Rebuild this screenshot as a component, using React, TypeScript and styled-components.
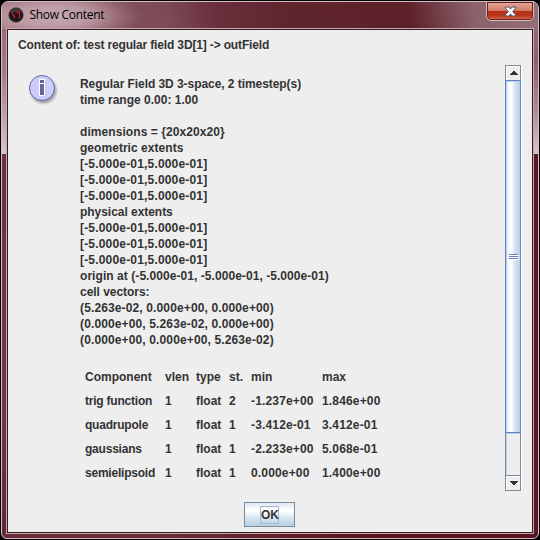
import React from 'react';
import styled, { createGlobalStyle } from 'styled-components';

const GlobalStyle = createGlobalStyle`
  * { box-sizing: border-box; }
  html, body { margin: 0; padding: 0; background: #000; overflow: hidden; }
`;

const Screen = styled.div`
  width: 540px;
  height: 540px;
  padding: 1px;
  background: #000;
  font: bold 12px/16px 'Liberation Sans', Arial, sans-serif;
  color: #333;
`;

const Frame = styled.div`
  width: 538px;
  height: 538px;
  display: flex;
  flex-direction: column;
  padding: 0 5px 5px;
  border: 1px solid #d5bfc5;
  border-radius: 7px 7px 6px 6px;
  background:
    linear-gradient(180deg, #9c6d77 0, #9c6d77 28px, #a67b86 70px, #d8c4c9 151px, #d8c4c9 152px) left top / 5px 152px no-repeat,
    linear-gradient(180deg, #9a717a 0, #8f606b 60px, #b08c95 110px, #d8c3c8 151px, #d8c3c8 152px) right top / 5px 152px no-repeat,
    linear-gradient(90deg, #6b2c3a, #6b2c3a 30%, #591320 70%, #591320) left bottom / 100% 5px no-repeat,
    linear-gradient(180deg, #6b2c3a, #743747 75%, #642533) left top / 5px 100% no-repeat,
    #5c1825;
`;

const TitleBar = styled.header`
  height: 27px;
  flex: none;
  margin: 0 -5px;
  padding-left: 6px;
  display: flex;
  align-items: flex-start;
  border-radius: 6px 6px 0 0;
  background:
    radial-gradient(ellipse 88px 26px at 54px 14px, rgba(214, 190, 197, 0.75) 0, rgba(214, 190, 197, 0.6) 40%, rgba(214, 190, 197, 0.2) 75%, transparent 100%),
    linear-gradient(78deg, #a37581 0, #8f5d69 90px, #7f4c59 130px, #7e4a58 165px, #69303d 210px, #602630 275px, #5c2029 400px, #8b626b 465px, #97727a 540px);
`;

const AppIcon = styled.svg`
  margin-top: 5px;
  flex: none;
`;

const Title = styled.h1`
  margin: 5px 0 0 5.5px;
  flex: 1;
  font: 12px/16px 'Open Sans', 'Noto Sans', sans-serif;
  letter-spacing: -0.3px;
  color: #000;
`;

const CloseButton = styled.button`
  width: 48px;
  height: 20px;
  margin: -1px 4px 0 0;
  padding: 0;
  display: grid;
  place-items: center;
  border: 1px solid #dcb9b8;
  border-radius: 0 0 5px 5px;
  box-shadow: inset 0 0 0 1px #64231f;
  background: linear-gradient(180deg, #e3aa9d 0, #d27a68 48%, #b92f17 50%, #b7341c 75%, #dc7451 100%);
`;

const Client = styled.main`
  flex: 1;
  padding: 7px 10px 5px 9px;
  display: flex;
  flex-direction: column;
  border: 1px solid #351d21;
  outline: 1px solid #c4a7ae;
  background: #eee;
`;

const Caption = styled.div`
  height: 28px;
  padding-left: 1px;
  letter-spacing: -0.15px;
`;

const Body = styled.section`
  height: 426px;
  display: flex;
`;

const IconColumn = styled.div`
  width: 63px;
  flex: none;
  padding: 9px 0 0 11px;
`;

const Report = styled.div`
  flex: 1;
  padding-top: 11px;
`;

const Line = styled.div<{ $spacing: number }>`
  height: 16px;
  white-space: nowrap;
  letter-spacing: ${p => p.$spacing}px;
`;

const Table = styled.div`
  margin: 17px 0 0 5px;
  display: grid;
  grid-template-columns: 80px 31px 33px 22px 71px 80px;
  grid-auto-rows: 24px;
  line-height: 24px;
  white-space: nowrap;
`;

const Cell = styled.span<{ $spacing: number }>`
  letter-spacing: ${p => p.$spacing}px;
`;

const ScrollBar = styled.div`
  width: 17px;
  flex: none;
  display: flex;
  flex-direction: column;
  border-right: 1px solid #fff;
`;

const ArrowButton = styled.div<{ $down?: boolean }>`
  height: ${p => (p.$down ? 16 : 15)}px;
  flex: none;
  padding-left: 2px;
  display: grid;
  place-items: center;
  border: 1px solid #7a8a99;
  border-bottom-width: ${p => (p.$down ? 1 : 0)}px;
  box-shadow: inset 1px 1px #fff;
`;

const Thumb = styled.div`
  height: 353px;
  flex: none;
  padding-left: 2px;
  display: grid;
  place-items: center;
  border: 1px solid #6382bf;
  box-shadow: inset 1px 1px #b8cfe5;
  background: linear-gradient(90deg, #ddeaf5 0, #fff 32%, #fff 40%, #dce8f3 58%, #b8cfe5 100%);
`;

const Track = styled.div`
  flex: 1;
  border: solid #7a8a99;
  border-width: 0 1px;
  box-shadow: inset 1px 1px #b8cfe5;
`;

const Footer = styled.footer`
  margin-top: 11px;
  display: flex;
  justify-content: center;
`;

const OkButton = styled.button`
  width: 51px;
  height: 25px;
  padding: 0;
  display: grid;
  place-items: center;
  border: 1px solid #7a8a99;
  background: linear-gradient(180deg, #dde8f3 0, #fff 30%, #fff 36%, #dde8f3 60%, #b8cfe5 100%);
  font: bold 12px/16px 'Liberation Sans', Arial, sans-serif;
  color: #333;
`;

const FocusRing = styled.span`
  width: 19px;
  height: 18px;
  border: 1px solid #a3b8cc;
  display: grid;
  place-items: center;
  line-height: 16px;
  letter-spacing: -0.2px;
`;

const lines: [string, number][] = [
  ['Regular Field 3D 3-space, 2 timestep(s)', -0.06],
  ['time range 0.00: 1.00', 0],
  ['', 0],
  ['dimensions = {20x20x20}', 0.07],
  ['geometric extents', 0.04],
  ['[-5.000e-01,5.000e-01]', 0.18],
  ['[-5.000e-01,5.000e-01]', 0.18],
  ['[-5.000e-01,5.000e-01]', 0.18],
  ['physical extents', -0.04],
  ['[-5.000e-01,5.000e-01]', 0.18],
  ['[-5.000e-01,5.000e-01]', 0.18],
  ['[-5.000e-01,5.000e-01]', 0.18],
  ['origin at (-5.000e-01, -5.000e-01, -5.000e-01)', 0.06],
  ['cell vectors:', -0.04],
  ['(5.263e-02, 0.000e+00, 0.000e+00)', 0.13],
  ['(0.000e+00, 5.263e-02, 0.000e+00)', 0.13],
  ['(0.000e+00, 0.000e+00, 5.263e-02)', 0.13],
];

const rows = [
  ['Component', 'vlen', 'type', 'st.', 'min', 'max'],
  ['trig function', '1', 'float', '2', '-1.237e+00', '1.846e+00'],
  ['quadrupole', '1', 'float', '1', '-3.412e-01', '3.412e-01'],
  ['gaussians', '1', 'float', '1', '-2.233e+00', '5.068e-01'],
  ['semielipsoid', '1', 'float', '1', '0.000e+00', '1.400e+00'],
];

const columnSpacing = [-0.22, 0, 0, 0, 0.16, 0.16];

const InfoIcon = () => (
  <svg width="32" height="32" viewBox="0 0 32 32">
    <defs>
      <filter id="soft" x="-20%" y="-20%" width="150%" height="150%">
        <feGaussianBlur stdDeviation="1.1" />
      </filter>
    </defs>
    <circle cx="15.5" cy="16.5" r="13" fill="#888" opacity=".75" filter="url(#soft)" />
    <circle cx="14" cy="14" r="12.500" fill="#ccccff" stroke="#666699" />
    <path d="M11 5h6v5h-6zM11 9h6v13h-6z" fill="#fff" />
    <path d="M12 6h4v3h-4zM12 10h4v11h-4z" fill="#666699" />
  </svg>
);

const Arrow = ({ down }: { down?: boolean }) => (
  <svg width="8" height="4" viewBox="0 0 8 4" shapeRendering="crispEdges">
    <path d={down ? 'M0 0h8v1H0zM1 1h6v1H1zM2 2h4v1H2zM3 3h2v1H3z' : 'M3 0h2v1H3zM2 1h4v1H2zM1 2h6v1H1zM0 3h8v1H0z'} fill="#333" />
  </svg>
);

const Grip = () => (
  <svg width="10" height="6" viewBox="0 0 10 6" shapeRendering="crispEdges">
    <path d="M1 1h9v1H1zM1 3h9v1H1zM1 5h9v1H1z" fill="#fff" />
    <path d="M0 0h9v1H0zM0 2h9v1H0zM0 4h9v1H0z" fill="#6382bf" />
  </svg>
);

export default function App() {
  return (
    <Screen>
      <GlobalStyle />
      <Frame>
        <TitleBar>
          <AppIcon width="16" height="16" viewBox="0 0 16 16">
            <circle cx="8" cy="8" r="7.200" fill="#17191a" stroke="#3b3437" strokeWidth=".7" />
            <path d="M2.500 5h11.500Q11.500 1 8 1T2.500 5Z" fill="#393b3c" />
            <path d="M3.500 4.500L7 11M9 4.500l.5 2M11.500 4.500v7" fill="none" stroke="#ee1720" strokeWidth="1.2" />
          </AppIcon>
          <Title>Show Content</Title>
          <CloseButton aria-label="Close">
            <svg width="13" height="11" viewBox="0 0 13 11">
              <path d="M1.500 1h3.500l1.500 2L8 1h3.500v1.200L8.800 5.500l2.700 3.300V10H8L6.500 8 5 10H1.500V8.800l2.700-3.300-2.700-3.300z" fill="#f4f4f5" stroke="#525565" />
            </svg>
          </CloseButton>
        </TitleBar>
        <Client>
          <Caption>Content of: test regular field 3D[1] -&gt; outField</Caption>
          <Body>
            <IconColumn><InfoIcon /></IconColumn>
            <Report>
              {lines.map(([text, spacing], i) => <Line key={i} $spacing={spacing}>{text}</Line>)}
              <Table>
                {rows.flatMap((r, i) => r.map((c, j) => (
                  <Cell key={`${i}-${j}`} $spacing={i === 0 ? 0 : columnSpacing[j]}>{c}</Cell>
                )))}
              </Table>
            </Report>
            <ScrollBar>
              <ArrowButton><Arrow /></ArrowButton>
              <Thumb><Grip /></Thumb>
              <Track />
              <ArrowButton $down><Arrow down /></ArrowButton>
            </ScrollBar>
          </Body>
          <Footer>
            <OkButton><FocusRing>OK</FocusRing></OkButton>
          </Footer>
        </Client>
      </Frame>
    </Screen>
  );
}
